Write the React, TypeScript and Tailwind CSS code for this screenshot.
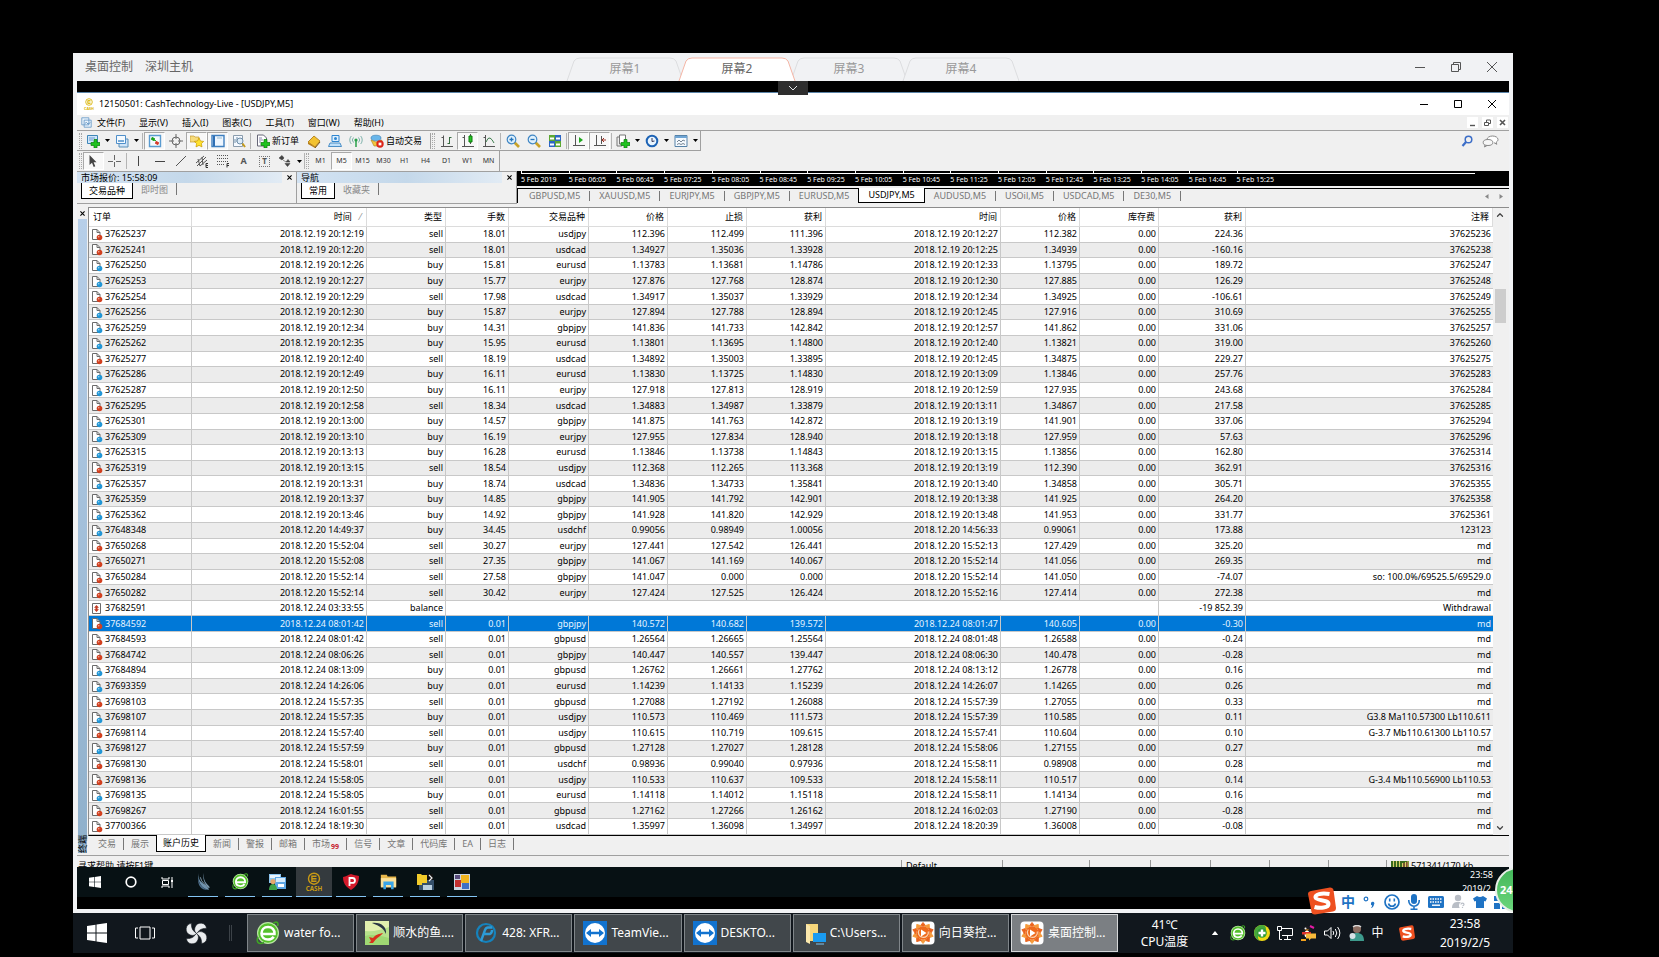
import type { ReactNode } from "react";
import { ChevronDown, ChevronUp } from "lucide-react";

type Order = {
  id: string;
  open: string;
  type: string;
  lots: string;
  symbol: string;
  price: string;
  sl: string;
  tp: string;
  close: string;
  closePrice: string;
  profit: string;
  comment: string;
};

const RAW = `37625237|2018.12.19 20:12:19|sell|18.01|usdjpy|112.396|112.499|111.396|2018.12.19 20:12:27|112.382|224.36|37625236
37625241|2018.12.19 20:12:20|sell|18.01|usdcad|1.34927|1.35036|1.33928|2018.12.19 20:12:25|1.34939|-160.16|37625238
37625250|2018.12.19 20:12:26|buy|15.81|eurusd|1.13783|1.13681|1.14786|2018.12.19 20:12:33|1.13795|189.72|37625247
37625253|2018.12.19 20:12:27|buy|15.77|eurjpy|127.876|127.768|128.874|2018.12.19 20:12:30|127.885|126.29|37625248
37625254|2018.12.19 20:12:29|sell|17.98|usdcad|1.34917|1.35037|1.33929|2018.12.19 20:12:34|1.34925|-106.61|37625249
37625256|2018.12.19 20:12:30|buy|15.87|eurjpy|127.894|127.788|128.894|2018.12.19 20:12:45|127.916|310.69|37625255
37625259|2018.12.19 20:12:34|buy|14.31|gbpjpy|141.836|141.733|142.842|2018.12.19 20:12:57|141.862|331.06|37625257
37625262|2018.12.19 20:12:35|buy|15.95|eurusd|1.13801|1.13695|1.14800|2018.12.19 20:12:40|1.13821|319.00|37625260
37625277|2018.12.19 20:12:40|sell|18.19|usdcad|1.34892|1.35003|1.33895|2018.12.19 20:12:45|1.34875|229.27|37625275
37625286|2018.12.19 20:12:49|buy|16.11|eurusd|1.13830|1.13725|1.14830|2018.12.19 20:13:09|1.13846|257.76|37625283
37625287|2018.12.19 20:12:50|buy|16.11|eurjpy|127.918|127.813|128.919|2018.12.19 20:12:59|127.935|243.68|37625284
37625295|2018.12.19 20:12:58|sell|18.34|usdcad|1.34883|1.34987|1.33879|2018.12.19 20:13:11|1.34867|217.58|37625285
37625301|2018.12.19 20:13:00|buy|14.57|gbpjpy|141.875|141.763|142.872|2018.12.19 20:13:19|141.901|337.06|37625294
37625309|2018.12.19 20:13:10|buy|16.19|eurjpy|127.955|127.834|128.940|2018.12.19 20:13:18|127.959|57.63|37625296
37625315|2018.12.19 20:13:13|buy|16.28|eurusd|1.13846|1.13738|1.14843|2018.12.19 20:13:15|1.13856|162.80|37625314
37625319|2018.12.19 20:13:15|sell|18.54|usdjpy|112.368|112.265|113.368|2018.12.19 20:13:19|112.390|362.91|37625316
37625357|2018.12.19 20:13:31|buy|18.74|usdcad|1.34836|1.34733|1.35841|2018.12.19 20:13:40|1.34858|305.71|37625355
37625359|2018.12.19 20:13:37|buy|14.85|gbpjpy|141.905|141.792|142.901|2018.12.19 20:13:38|141.925|264.20|37625358
37625362|2018.12.19 20:13:46|buy|14.92|gbpjpy|141.928|141.820|142.929|2018.12.19 20:13:48|141.953|331.77|37625361
37648348|2018.12.20 14:49:37|buy|34.45|usdchf|0.99056|0.98949|1.00056|2018.12.20 14:56:33|0.99061|173.88|123123
37650268|2018.12.20 15:52:04|sell|30.27|eurjpy|127.441|127.542|126.441|2018.12.20 15:52:13|127.429|325.20|md
37650271|2018.12.20 15:52:08|sell|27.35|gbpjpy|141.067|141.169|140.067|2018.12.20 15:52:14|141.056|269.35|md
37650284|2018.12.20 15:52:14|sell|27.58|gbpjpy|141.047|0.000|0.000|2018.12.20 15:52:14|141.050|-74.07|so: 100.0%/69525.5/69529.0
37650282|2018.12.20 15:52:14|sell|30.42|eurjpy|127.424|127.525|126.424|2018.12.20 15:52:16|127.414|272.38|md
37682591|2018.12.24 03:33:55|balance||||||||-19 852.39|Withdrawal
37684592|2018.12.24 08:01:42|sell|0.01|gbpjpy|140.572|140.682|139.572|2018.12.24 08:01:47|140.605|-0.30|md
37684593|2018.12.24 08:01:42|sell|0.01|gbpusd|1.26564|1.26665|1.25564|2018.12.24 08:01:48|1.26588|-0.24|md
37684742|2018.12.24 08:06:26|sell|0.01|gbpjpy|140.447|140.557|139.447|2018.12.24 08:06:30|140.478|-0.28|md
37684894|2018.12.24 08:13:09|buy|0.01|gbpusd|1.26762|1.26661|1.27762|2018.12.24 08:13:12|1.26778|0.16|md
37693359|2018.12.24 14:26:06|buy|0.01|eurusd|1.14239|1.14133|1.15239|2018.12.24 14:26:07|1.14265|0.26|md
37698103|2018.12.24 15:57:35|sell|0.01|gbpusd|1.27088|1.27192|1.26088|2018.12.24 15:57:39|1.27055|0.33|md
37698107|2018.12.24 15:57:35|buy|0.01|usdjpy|110.573|110.469|111.573|2018.12.24 15:57:39|110.585|0.11|G3.8 Ma110.57300 Lb110.611
37698114|2018.12.24 15:57:40|sell|0.01|usdjpy|110.615|110.719|109.615|2018.12.24 15:57:41|110.604|0.10|G-3.7 Mb110.61300 Lb110.57
37698127|2018.12.24 15:57:59|buy|0.01|gbpusd|1.27128|1.27027|1.28128|2018.12.24 15:58:06|1.27155|0.27|md
37698130|2018.12.24 15:58:01|sell|0.01|usdchf|0.98936|0.99040|0.97936|2018.12.24 15:58:11|0.98908|0.28|md
37698136|2018.12.24 15:58:05|sell|0.01|usdjpy|110.533|110.637|109.533|2018.12.24 15:58:11|110.517|0.14|G-3.4 Mb110.56900 Lb110.53
37698135|2018.12.24 15:58:05|buy|0.01|eurusd|1.14118|1.14012|1.15118|2018.12.24 15:58:11|1.14134|0.16|md
37698267|2018.12.24 16:01:55|sell|0.01|gbpusd|1.27162|1.27266|1.26162|2018.12.24 16:02:03|1.27190|-0.28|md
37700366|2018.12.24 18:19:30|sell|0.01|usdcad|1.35997|1.36098|1.34997|2018.12.24 18:20:39|1.36008|-0.08|md`;

const ORDERS: Order[] = RAW.split("\n").map((line) => {
  const c = line.split("|");
  return {
    id: c[0], open: c[1], type: c[2], lots: c[3], symbol: c[4], price: c[5], sl: c[6], tp: c[7],
    close: c[8], closePrice: c[9], profit: c[10], comment: c[11],
  };
});

const SELECTED = "37684592";

const CHART_TIMES = [
  "5 Feb 2019", "5 Feb 06:05", "5 Feb 06:45", "5 Feb 07:25", "5 Feb 08:05", "5 Feb 08:45", "5 Feb 09:25", "5 Feb 10:05",
  "5 Feb 10:45", "5 Feb 11:25", "5 Feb 12:05", "5 Feb 12:45", "5 Feb 13:25", "5 Feb 14:05", "5 Feb 14:45", "5 Feb 15:25",
];

const CHART_TABS = ["GBPUSD,M5", "XAUUSD,M5", "EURJPY,M5", "GBPJPY,M5", "EURUSD,M5", "USDJPY,M5", "AUDUSD,M5", "USOil,M5", "USDCAD,M5", "DE30,M5"];

const TERMINAL_TABS = ["交易", "展示", "账户历史", "新闻", "警报", "邮箱", "市场", "信号", "文章", "代码库", "EA", "日志"];

function Icon(props: { children: ReactNode; box?: string; className?: string }) {
  return (
    <svg viewBox={props.box ?? "0 0 14 14"} className={props.className ?? "size-[14px] shrink-0"} fill="none" aria-hidden="true">
      {props.children}
    </svg>
  );
}

/* ---------- outer remote-control window ---------- */

function ScreenTab(props: { label: string; active?: boolean }) {
  return (
    <button className={["relative w-[112px] h-6 text-xs", props.active ? "z-10 text-[#666]" : "text-[#999]"].join(" ")}>
      <svg viewBox="0 0 118 24" className="absolute -left-[3px] top-0 h-6 w-[118px]" fill={props.active ? "#fff" : "#f1f2f4"} aria-hidden="true">
        <path d="M1 24 L8 4 Q10 1 14 1 H104 Q108 1 110 4 L117 24" stroke={props.active ? "#f4b5a5" : "#dcdddf"} />
      </svg>
      <span className="relative">{props.label}</span>
    </button>
  );
}

function OuterTitle() {
  return (
    <header className="relative grid h-7 grid-cols-[1fr_auto_1fr] items-center bg-[#f1f2f4] text-xs text-[#666]">
      <div className="flex gap-3 pl-3">
        <span>桌面控制</span>
        <span>深圳主机</span>
      </div>
      <nav className="flex self-end">
        <ScreenTab label="屏幕1" />
        <ScreenTab label="屏幕2" active />
        <ScreenTab label="屏幕3" />
        <ScreenTab label="屏幕4" />
      </nav>
      <div className="flex justify-end gap-6 pr-[15px] text-[#555]">
        <button aria-label="最小化"><Icon box="0 0 12 12" className="size-3"><path d="M1 6.5h10" stroke="currentColor" /></Icon></button>
        <button aria-label="还原"><Icon box="0 0 12 12" className="size-3"><path d="M1.5 3.5h7v7h-7zM3.5 3.5v-2h7v7h-2" stroke="currentColor" /></Icon></button>
        <button aria-label="关闭"><Icon box="0 0 12 12" className="size-3"><path d="M1 1l10 10M11 1L1 11" stroke="currentColor" /></Icon></button>
      </div>
      <button aria-label="展开" className="absolute left-1/2 top-7 z-20 -ml-[15px] flex h-[14px] w-[30px] items-center justify-center bg-[#2e2e2e] text-gray-200">
        <Icon box="0 0 10 6" className="h-[6px] w-[10px]"><path d="M1 1l4 4 4-4" stroke="currentColor" /></Icon>
      </button>
    </header>
  );
}

/* ---------- terminal: title, menu, toolbars ---------- */

function CashLogo(props: { className: string; color: string }) {
  return (
    <svg viewBox="0 0 24 24" className={props.className} fill="none" stroke={props.color} aria-hidden="true">
      <circle cx="12" cy="8" r="6.6" strokeWidth="1.7" />
      <path d="M15 5H9.5v6H15M9.5 8H15" strokeWidth="1.7" />
      <text x="12" y="23" textAnchor="middle" fontSize="7.5" fontWeight="700" stroke="none" fill={props.color}>CASH</text>
    </svg>
  );
}

function TitleBar() {
  return (
    <div className="flex h-[22px] items-center bg-white pl-[6px] pr-3">
      <CashLogo className="size-[12px]" color="#d9b300" />
      <h1 className="ml-1 flex-1 text-[9px] text-black">12150501: CashTechnology-Live - [USDJPY,M5]</h1>
      <div className="flex items-center gap-6 text-black">
        <button aria-label="最小化"><Icon box="0 0 10 10" className="size-[10px]"><path d="M1 5.5h8" stroke="currentColor" /></Icon></button>
        <button aria-label="最大化"><Icon box="0 0 10 10" className="size-[10px]"><path d="M1.5 1.5h7v7h-7z" stroke="currentColor" /></Icon></button>
        <button aria-label="关闭"><Icon box="0 0 10 10" className="size-[10px]"><path d="M1 1l8 8M9 1L1 9" stroke="currentColor" /></Icon></button>
      </div>
    </div>
  );
}

const MENUS = ["文件(F)", "显示(V)", "插入(I)", "图表(C)", "工具(T)", "窗口(W)", "帮助(H)"];

function MenuBar() {
  return (
    <div className="flex h-4 items-center border-b border-[#a0a0a0] pl-1">
      <Icon className="size-[11px]">
        <path d="M1 1h9v9H1zM4 4h9v9H4z" fill="#e8f2fb" stroke="#5f94c4" />
        <path d="M5 8l2-1 2 2 3-2" stroke="#4d86ba" />
      </Icon>
      <div className="ml-[5px] flex gap-[14px]">
        {MENUS.map((m) => (
          <button key={m} className="text-[9px] text-black">{m}</button>
        ))}
      </div>
      <div className="ml-auto flex gap-1 pr-px text-[#555]">
        <button aria-label="最小化图表" className="bg-white"><Icon box="0 0 11 11" className="size-[11px]"><path d="M3 8.5h5" stroke="currentColor" strokeWidth="1.4" /></Icon></button>
        <button aria-label="还原图表" className="bg-white"><Icon box="0 0 11 11" className="size-[11px]"><path d="M2.5 5.5h4v3h-4zM4.5 5v-2h4v3.5h-2" stroke="currentColor" /></Icon></button>
        <button aria-label="关闭图表" className="bg-white"><Icon box="0 0 11 11" className="size-[11px]"><path d="M3 3l5 5M8 3L3 8" stroke="currentColor" strokeWidth="1.6" /></Icon></button>
      </div>
    </div>
  );
}

function Grip() {
  return <span className="mr-px h-4 w-[3px] shrink-0 border-x border-dotted border-[#a8a8a8]" />;
}

function Sep() {
  return <span className="mx-px h-4 w-px shrink-0 bg-[#b4b4b4]" />;
}

function Tool(props: { label: string; pressed?: boolean; drop?: boolean; text?: string; children?: ReactNode }) {
  return (
    <button
      aria-label={props.label}
      className={[
        "flex h-[18px] shrink-0 items-center justify-center text-[9px]",
        props.text ? "gap-[2px] px-1" : props.drop ? "w-[29px] gap-[5px]" : "w-[21px]",
        props.pressed ? "border border-[#a9a9a9] border-b-white border-r-white bg-[#f8f8f8]" : "",
      ].join(" ")}
    >
      {props.children}
      {props.text ? <span>{props.text}</span> : null}
      {props.drop ? <Icon box="0 0 5 3" className="h-[3px] w-[5px] shrink-0"><path d="M0 0h5L2.5 3z" fill="#000" /></Icon> : null}
    </button>
  );
}

const PLUS = "M8 5.500h3v3h3v3h-3v2.500H8v-2.500H5v-3h3z";

function Toolbar() {
  return (
    <div className="flex h-5 items-center pr-2">
      <div className="flex h-5 items-center border-b border-r border-[#a0a0a0] pl-[2px]">
        <Grip />
        <Tool label="新图表" drop>
          <Icon><path d="M1.5 1.5h10v8h-10z" fill="#cfe6fa" stroke="#3f86b8" /><path d="M3 4h6M3 6h4" stroke="#6a9bd0" /><path d={PLUS} fill="#1fc21f" stroke="#0a7d0a" strokeWidth=".7" /></Icon>
        </Tool>
        <Tool label="配置文件" drop>
          <Icon><path d="M4 5h9v8H4z" fill="#cfe4f7" stroke="#5a8fb8" /><path d="M1.5 1.5h9v8h-9z" fill="#f4faff" stroke="#4f8fca" /><path d="M3 7h6" stroke="#4f8fca" strokeWidth="1.5" /></Icon>
        </Tool>
        <Sep />
        <Tool label="市场报价" pressed>
          <Icon><path d="M1.500 1.500h11v11h-11z" fill="#f4faff" stroke="#5a9bd0" strokeWidth="1.400" /><path d="M4 3.500l2.500 1-.5 2-2.500-1zM6 6l2 .8" fill="#18a018" stroke="#18a018" /><path d="M8 7.500l2.500 1-.5 2-2.500-1z" fill="#d63b2a" stroke="#d63b2a" /></Icon>
        </Tool>
        <Tool label="数据窗口">
          <Icon><circle cx="7" cy="7" r="4" stroke="#666" /><path d="M7 0v5M7 9v5M0 7h5M9 7h5" stroke="#666" /></Icon>
        </Tool>
        <Tool label="导航" pressed>
          <Icon><path d="M0 2h4l1 1h4v5H0z" fill="#f7dc7c" stroke="#c39a33" strokeWidth=".7" /><path d="M9 4l1.5 3 3.2.4-2.3 2.2.6 3.3L9 11.4 6 12.9l.6-3.3L4.3 7.4 7.5 7z" fill="#ffe22e" stroke="#c79a00" strokeWidth=".7" /></Icon>
        </Tool>
        <Tool label="终端" pressed>
          <Icon><path d="M1 1.5h12v11H1z" fill="#eef6ff" stroke="#3f7fbf" strokeWidth="1.400" /><path d="M2 2h2v10H2z" fill="#2f6fb4" /><path d="M6 4h5" stroke="#9bc" /></Icon>
        </Tool>
        <Tool label="策略测试">
          <Icon><path d="M1.5 1.5h9v11h-9z" fill="#f5f9ff" stroke="#8a9cad" /><path d="M3 9V5M5 8V3" stroke="#6f8ea8" /><circle cx="8" cy="7" r="3" fill="#dcebf8" stroke="#6f8ea8" /><path d="M10.5 9.5L13 13" stroke="#c49a1c" strokeWidth="2" /></Icon>
        </Tool>
        <Sep />
        <Tool label="新订单" text="新订单">
          <Icon><path d="M1.5 1h6l3 3v8h-9z" fill="#fff" stroke="#667" /><path d="M3 4h3M3 6h4M3 8h2" stroke="#88a" /><path d={PLUS} fill="#1fc21f" stroke="#0a7d0a" strokeWidth=".7" /></Icon>
        </Tool>
        <Tool label="编辑器">
          <Icon><path d="M1 8l6-6 6 5-5 6z" fill="#f2c230" stroke="#a87410" strokeWidth=".8" /><path d="M1 8v2l7 4v-1z" fill="#b67d16" /><path d="M8 14l5-6" stroke="#7c5410" /></Icon>
        </Tool>
        <Tool label="社区">
          <Icon><path d="M4 1.5h7v6H4z" fill="#dff0ff" stroke="#2f86d0" /><circle cx="7.5" cy="4.5" r="1.5" fill="#2f86d0" /><path d="M2 9h10l1.5 3.5H.5z" fill="#bfe0fa" stroke="#4b8ec6" /></Icon>
        </Tool>
        <Tool label="信号">
          <Icon><circle cx="7" cy="6" r="1.6" fill="#2aa04a" /><path d="M7 7v6" stroke="#2aa04a" strokeWidth="1.5" /><path d="M4.5 3.5a3.5 3.5 0 000 5M9.5 3.5a3.5 3.5 0 010 5M2.3 2a6 6 0 000 8M11.7 2a6 6 0 010 8" stroke="#7fb2ab" /></Icon>
        </Tool>
        <Tool label="自动交易" text="自动交易">
          <Icon><ellipse cx="6" cy="4" rx="5" ry="2.8" fill="#69b6ea" stroke="#327bb0" strokeWidth=".6" /><path d="M1 6l5 2 6-2-2 6H4z" fill="#f3c63c" stroke="#a8801c" strokeWidth=".6" /><circle cx="10" cy="10" r="3.7" fill="#dc2418" /><path d="M8.6 8.6h2.8v2.8H8.6z" fill="#fff" /></Icon>
        </Tool>
        <span className="ml-1 mr-px h-4 w-px bg-[#a0a0a0]" />
        <Grip />
        <Tool label="柱状图">
          <Icon><path d="M3.5 1.500v11M1 12.500h12M1.500 3.500h2" stroke="#555" /><path d="M9.500 3v7M9.500 3.500h2M7.500 9.500h2" stroke="#356b3f" /></Icon>
        </Tool>
        <Tool label="蜡烛图" pressed>
          <Icon><path d="M3.500 1v11M1 12.500h12M9.500 0v10M1.500 3.500h2" stroke="#555" /><path d="M8 2h3v6H8z" fill="#28c428" stroke="#0a7d0a" /></Icon>
        </Tool>
        <Tool label="折线图">
          <Icon><path d="M3.500 1v11M1 12.500h12M1.500 3.500h2" stroke="#555" /><path d="M4 8q2-5 4-4t4 5" stroke="#3f7f4f" /></Icon>
        </Tool>
        <Sep />
        <Tool label="放大">
          <Icon><path d="M8.5 8.5L13 13" stroke="#c9a227" strokeWidth="2.6" /><circle cx="5.5" cy="5.5" r="4.3" fill="#dff0fc" stroke="#3f86c4" strokeWidth="1.2" /><path d="M3.5 5.5h4M5.5 3.5v4" stroke="#2474bb" strokeWidth="1.3" /></Icon>
        </Tool>
        <Tool label="缩小">
          <Icon><path d="M8.5 8.5L13 13" stroke="#c9a227" strokeWidth="2.6" /><circle cx="5.5" cy="5.5" r="4.3" fill="#dff0fc" stroke="#3f86c4" strokeWidth="1.2" /><path d="M3.5 5.5h4" stroke="#2474bb" strokeWidth="1.3" /></Icon>
        </Tool>
        <Tool label="平铺窗口">
          <Icon><path d="M1 1h6v6H1zM7 7h6v6H7z" fill="#5da832" /><path d="M7 1h6v6H7zM1 7h6v6H1z" fill="#2d66c4" /><path d="M2 3.5h4v2H2zM8 3.5h4v2H8zM2 9.5h4v2H2zM8 9.5h4v2H8z" fill="#fff" /></Icon>
        </Tool>
        <Sep />
        <Tool label="自动滚动" pressed>
          <Icon><path d="M3.500 1v11M1 11.500h12" stroke="#555" /><path d="M7 3l4 3-4 3z" fill="#1fa81f" /></Icon>
        </Tool>
        <Tool label="图表平移" pressed>
          <Icon><path d="M3.500 1v11M1 11.500h12M8.500 2v8" stroke="#555" /><path d="M13 6H9M11 4L9 6l2 2" stroke="#9c2f22" /></Icon>
        </Tool>
        <Sep />
        <Tool label="指标" drop>
          <Icon><path d="M1 3h5v9H1z" fill="#eee" stroke="#777" /><path d="M3.5 1h6v9h-6z" fill="#fff" stroke="#777" /><path d={PLUS} fill="#1fc21f" stroke="#0a7d0a" strokeWidth=".7" /></Icon>
        </Tool>
        <Tool label="时间周期" drop>
          <Icon><circle cx="7" cy="7" r="5.3" fill="#e9f5ff" stroke="#1d63b5" strokeWidth="2" /><path d="M7 4v3.5l2.5-.5" stroke="#335" /></Icon>
        </Tool>
        <Tool label="模板" drop>
          <Icon><path d="M1 1.5h12v11H1z" fill="#f5faff" stroke="#5682a8" /><path d="M1 3h12" stroke="#6fa5d4" strokeWidth="2" /><path d="M3 8l2-2 2 2 2-2 2 1M3 10.5l2-1 2 1 2-1 2 1" stroke="#567" strokeWidth=".8" /></Icon>
        </Tool>
      </div>
      <div className="ml-auto flex items-center gap-2 pr-[2px]">
        <button aria-label="搜索" className="pr-px">
          <Icon box="0 0 12 12" className="size-3"><circle cx="7.500" cy="4.500" r="3.300" stroke="#3c6ec8" strokeWidth="1.500" /><path d="M5 7L1.500 11" stroke="#3c6ec8" strokeWidth="2.200" /></Icon>
        </button>
        <button aria-label="聊天">
          <Icon box="0 0 17 13" className="h-[13px] w-[17px]">
            <path d="M5 4.500C5 2.500 7.500 1 10.500 1S16 2.500 16 4.500c0 1.300-.8 2-1.800 2.600l.6 2.200L12 7.700" fill="#fff" stroke="#888" />
            <ellipse cx="6" cy="7.500" rx="4.800" ry="3" fill="#f6f6f6" stroke="#888" />
            <path d="M3 10l-.5 2L5 10.500" stroke="#888" />
          </Icon>
        </button>
      </div>
    </div>
  );
}

const PERIODS = ["M1", "M5", "M15", "M30", "H1", "H4", "D1", "W1", "MN"];

function DrawingBar() {
  return (
    <div className="flex h-5 items-center">
      <div className="flex h-5 items-center border-r border-[#a0a0a0] pl-[2px]">
        <Grip />
        <Tool label="光标" pressed><Icon><path d="M2.500 1v10L5 8.800 6.700 13l1.600-.7-1.700-4h2.900z" fill="#444" /></Icon></Tool>
        <Tool label="十字线"><Icon><path d="M6.500 1v5M6.500 8v5M0 7.500h5M8 7.500h5" stroke="#666" /></Icon></Tool>
        <Sep />
        <Tool label="垂直线"><Icon><path d="M6.5 2v10" stroke="#444" /></Icon></Tool>
        <Tool label="水平线"><Icon><path d="M2 7.5h10" stroke="#444" /></Icon></Tool>
        <Tool label="趋势线"><Icon><path d="M2 12L12 2" stroke="#555" /></Icon></Tool>
        <Tool label="通道"><Icon><path d="M1 9l8-7M2 12l9-9M5 12l7-6M3 5l2 7M7 3l1 8" stroke="#555" /><path d="M13 9.5h-2v4h2M11 11.5h2" stroke="#333" /></Icon></Tool>
        <Tool label="斐波纳契"><Icon><path d="M1 1.500h12M1 4.500h12M1 7.500h12M1 10.500h8" stroke="#555" strokeDasharray="1 1" /><path d="M13 9.500h-2v4M11 11.500h2" stroke="#333" /></Icon></Tool>
        <Tool label="文字"><span className="font-bold text-[#555]">A</span></Tool>
        <Tool label="文字标签">
          <span className="flex size-[11px] items-center justify-center border border-dotted border-[#777] text-[8px] font-bold leading-none text-[#555]">T</span>
        </Tool>
        <Tool label="箭头" drop><Icon><path d="M1 4l3-2.500L6 4 4 6zM5 6l3 2M8 8h4l-2-2.500zM7 9.500l2.500 3L12 9.500z" fill="#444" stroke="#444" strokeWidth=".6" /></Icon></Tool>
        <span className="mr-px h-4 w-px bg-[#b4b4b4]" />
        <Grip />
        {PERIODS.map((p) => (
          <button
            key={p}
            className={["h-[18px] w-[21px] text-[7px] text-[#333]", p === "M5" ? "border border-[#a9a9a9] border-b-white border-r-white bg-[#f8f8f8]" : ""].join(" ")}
          >
            {p}
          </button>
        ))}
      </div>
    </div>
  );
}

/* ---------- docked panels and chart strip ---------- */

function DockPanel(props: { title: string; tabs: [string, string] }) {
  return (
    <section className="flex w-[220px] shrink-0 flex-col border-b border-r border-t border-[#a0a0a0]">
      <div className="flex h-[11px] items-center justify-between bg-linear-to-r from-[#d3e3f3] via-[#c4d8ea] to-[#e6eef6] pl-1">
        <h2 className="text-[9px] leading-[11px] text-black">{props.title}</h2>
        <button aria-label="关闭" className="flex h-[11px] w-[14px] items-center justify-center bg-[#f0f0f0]">
          <Icon box="0 0 6 6" className="size-[5px]"><path d="M.5.5l5 5M5.5.5l-5 5" stroke="#000" strokeWidth="1.3" /></Icon>
        </button>
      </div>
      <div className="flex h-5 items-start pl-1 text-[9px]">
        <button className="h-4 border border-t-0 border-black bg-white px-[7px] text-black">{props.tabs[0]}</button>
        <button className="h-3 border-r border-[#777] px-2 leading-[14px] text-[#888]">{props.tabs[1]}</button>
      </div>
    </section>
  );
}

function ChartStrip() {
  return (
    <section className="flex min-w-0 flex-1 flex-col">
      <div className="h-[17px] overflow-hidden border-b-2 border-[#f0f0f0] bg-black pl-1 pr-[34px]">
        <div className="flex w-[80%]">
          {CHART_TIMES.map((t) => (
            <span key={t} className="h-[2px] flex-1 border-l border-white" />
          ))}
        </div>
        <div className="border-t border-white">
          <div className="flex w-[80%] text-[7px] leading-[12px] text-white">
            {CHART_TIMES.map((t) => (
              <span key={t} className="min-w-0 flex-1 whitespace-nowrap">{t}</span>
            ))}
          </div>
        </div>
      </div>
      <div className="flex h-[15px] items-start border-l border-t border-black pl-[2px] text-[9px]">
        {CHART_TABS.map((t) =>
          t === "USDJPY,M5" ? (
            <button key={t} className="-mt-px h-[15px] border border-t-0 border-black bg-white px-[9px] leading-[14px] text-black">{t}</button>
          ) : (
            <button key={t} className="flex h-[14px] items-center text-[#777]">
              <span className="px-[9px]">{t}</span>
              {t === "EURUSD,M5" ? null : <span className="h-[10px] w-px bg-[#777]" />}
            </button>
          ),
        )}
        <div className="ml-auto flex gap-[10px] self-center pr-[6px]">
          <Icon box="0 0 4 5" className="h-[5px] w-1"><path d="M3.5 0v5L0 2.5z" fill="#888" /></Icon>
          <Icon box="0 0 4 5" className="h-[5px] w-1"><path d="M.5 0v5L4 2.5z" fill="#888" /></Icon>
        </div>
      </div>
    </section>
  );
}

/* ---------- account history ---------- */

function OrderIcon(props: { type: string }) {
  if (props.type === "balance") {
    return (
      <Icon box="0 0 12 13" className="h-[13px] w-3 shrink-0">
        <path d="M1.5 1.5h8v10h-8z" fill="#fff" stroke="#6b6b6b" />
        <path d="M5.5 3L8 5.700H6.500v1.600H8L5.500 10 3 7.300h1.500V5.700H3z" fill="#c23a22" />
      </Icon>
    );
  }
  const ball = props.type === "sell" ? "#d2401f" : "#2196d6";
  return (
    <Icon box="0 0 12 13" className="h-[13px] w-3 shrink-0">
      <path d="M1.5 1.5H6l3 3v7H1.5z" fill="#fff" stroke="#6b6b6b" />
      <path d="M6 1.5v3h3" stroke="#6b6b6b" />
      <circle cx="8.5" cy="9.5" r="2.8" fill={ball} />
      <circle cx="7.7" cy="8.7" r=".8" fill="#fff" fillOpacity=".6" />
    </Icon>
  );
}

const HEADERS = ["订单", "时间", "类型", "手数", "交易品种", "价格", "止损", "获利", "时间", "价格", "库存费", "获利", "注释"];

function Cell(props: { children?: ReactNode; span?: number; last?: boolean }) {
  return (
    <td colSpan={props.span} className={["border-b border-[#c8c8c8] p-0 pr-[2px]", props.last ? "" : "border-r"].join(" ")}>
      {props.children}
    </td>
  );
}

function OrderRow(props: { order: Order; index: number }) {
  const o = props.order;
  const tone = o.id === SELECTED ? "bg-[#0078d7] text-[#e6f4ff]" : props.index % 2 ? "bg-[#ececec]" : "bg-white";
  return (
    <tr className={tone}>
      <td className="border-b border-r border-[#c8c8c8] p-0 pl-[2px] text-left">
        <div className="flex h-[14px] items-center gap-[2px]">
          <OrderIcon type={o.type} />
          {o.id}
        </div>
      </td>
      <Cell>{o.open}</Cell>
      <Cell>{o.type}</Cell>
      {o.type === "balance" ? (
        <Cell span={8} />
      ) : (
        <>
          <Cell>{o.lots}</Cell>
          <Cell>{o.symbol}</Cell>
          <Cell>{o.price}</Cell>
          <Cell>{o.sl}</Cell>
          <Cell>{o.tp}</Cell>
          <Cell>{o.close}</Cell>
          <Cell>{o.closePrice}</Cell>
          <Cell>0.00</Cell>
        </>
      )}
      <Cell>{o.profit}</Cell>
      <Cell last>{o.comment}</Cell>
    </tr>
  );
}

function HistoryTable() {
  return (
    <table className="h-full w-full table-fixed border-separate border-spacing-0 text-right text-[9px] leading-[14px] text-black">
      <colgroup>
        <col className="w-[103px]" />
        <col className="w-[175px]" />
        <col className="w-[79px]" />
        <col className="w-[63px]" />
        <col className="w-[80px]" />
        <col className="w-[79px]" />
        <col className="w-[79px]" />
        <col className="w-[79px]" />
        <col className="w-[175px]" />
        <col className="w-[79px]" />
        <col className="w-[79px]" />
        <col className="w-[87px]" />
        <col />
      </colgroup>
      <thead>
        <tr className="h-[19px] bg-white">
          {HEADERS.map((h, i) => (
            <th key={i} className={["h-[19px] border-b border-r border-[#dcdcdc] p-0 pb-px font-normal", i === 0 ? "pl-1 text-left" : "pr-[3px]"].join(" ")}>
              {h}
              {i === 1 ? <span className="ml-2 mr-[2px] text-[#888]">⁄</span> : null}
            </th>
          ))}
        </tr>
      </thead>
      <tbody>
        {ORDERS.map((o, i) => (
          <OrderRow key={o.id} order={o} index={i} />
        ))}
      </tbody>
    </table>
  );
}

function Terminal() {
  return (
    <section className="flex min-h-0 flex-1 pt-[3px]">
      <div className="flex w-[11px] shrink-0 flex-col items-center">
        <button aria-label="关闭终端" className="flex h-3 items-center">
          <Icon box="0 0 6 6" className="size-[5px]"><path d="M.5.5l5 5M5.5.5l-5 5" stroke="#000" strokeWidth="1.3" /></Icon>
        </button>
        <div className="mb-[2px] flex w-[9px] flex-1 items-end justify-center bg-linear-to-b from-[#b7cfe9] to-[#8fb0cb]">
          <span className="rotate-180 text-[9px] leading-[9px] text-black [text-orientation:sideways] [writing-mode:vertical-rl]">终端</span>
        </div>
      </div>
      <div className="flex min-w-0 flex-1 flex-col">
        <div className="flex min-h-0 flex-1 border-l border-t border-[#8c8c8c] border-b border-b-black bg-white">
          <div className="min-w-0 flex-1 overflow-hidden">
            <HistoryTable />
          </div>
          <div className="flex w-[14px] shrink-0 flex-col items-center bg-[#f0f0f0]">
            <ChevronUp className="h-[14px] w-[10px] text-[#444]" strokeWidth={3} />
            <div className="grow-[67]" />
            <div className="h-[34px] w-[11px] bg-[#cdcdcd]" />
            <div className="grow-[496]" />
            <ChevronDown className="h-[14px] w-[10px] text-[#444]" strokeWidth={3} />
          </div>
          <div className="w-[2px] bg-[#f0f0f0]" />
        </div>
        <nav className="flex h-[19px] items-start text-[9px] text-[#777]">
          {TERMINAL_TABS.map((t, i) =>
            t === "账户历史" ? (
              <button key={t} className="-mt-px h-[17px] border border-t-0 border-black bg-white px-[6px] text-black">{t}</button>
            ) : (
              <button key={t} className="flex h-4 items-center">
                <span className={i === 0 ? "pl-[10px] pr-[7px]" : "px-[7px]"}>
                  {t}
                  {t === "市场" ? <sub className="ml-px text-[7px] font-bold leading-none text-[#c4162a]">99</sub> : null}
                </span>
                {t === "展示" ? null : <span className="h-3 w-px bg-[#777]" />}
              </button>
            ),
          )}
        </nav>
      </div>
    </section>
  );
}

function StatusBar() {
  return (
    <div className="flex h-3 overflow-hidden border-t border-[#a0a0a0] pt-1 text-[9px] leading-[11px] text-black">
      <span className="flex-1 pl-px">寻求帮助,请按F1键</span>
      <span className="w-[101px] border-l border-[#999] pl-1">Default</span>
      <span className="w-[87px] border-l border-[#999]" />
      <span className="w-[61px] border-l border-[#999]" />
      <span className="w-[60px] border-l border-[#999]" />
      <span className="w-[59px] border-l border-[#999]" />
      <span className="w-[59px] border-l border-[#999]" />
      <span className="w-[58px] border-l border-[#999]" />
      <span className="flex w-[123px] gap-[2px] border-l border-[#999] pl-1">
        <Icon box="0 0 18 8" className="mt-px h-2 w-[18px]">
          <path d="M0 0h18v8H0z" fill="#3b6b1e" />
          <path d="M2.5 0v8M5.5 0v8M8.5 0v8M11.5 2v6M14.5 1v7M17 0v8" stroke="#d9cf6a" />
          <path d="M13 2v6M16 1v7" stroke="#b44" />
        </Icon>
        571341/170 kb
      </span>
    </div>
  );
}

/* ---------- remote desktop task bar ---------- */

function WindowsLogo(props: { className: string }) {
  return (
    <svg viewBox="0 0 20 20" className={props.className} fill="#fff" aria-hidden="true">
      <path d="M0 3l8.5-1.3v7.8H0zM9.5 1.5L20 0v9.5H9.5zM0 10.5h8.5v7.8L0 17zM9.5 10.5H20V20L9.5 18.5z" />
    </svg>
  );
}

function BrowserLogo(props: { className: string }) {
  return (
    <svg viewBox="0 0 24 24" className={props.className} fill="none" aria-hidden="true">
      <circle cx="12" cy="12" r="11" fill="#b9e8a3" />
      <circle cx="12" cy="12" r="9.800" fill="#55c02c" />
      <path d="M5.500 13h13c.3-4.300-2.500-7-6.500-7S5.500 9 5.500 12.500s2.600 6 6.500 6c2.600 0 4.500-1 5.700-2.800" stroke="#fff" strokeWidth="2.600" />
      <path d="M2 16C0 21 2.500 24 8 21.500M17 2.500c3-2.500 6-1.500 4.500 2.500" stroke="#3ea523" strokeWidth="1.600" />
    </svg>
  );
}

function FolderLogo(props: { className: string }) {
  return (
    <svg viewBox="0 0 20 20" className={props.className} fill="none" aria-hidden="true">
      <path d="M1 2h7l1 2h10v12H1z" fill="#e8b74b" />
      <path d="M1 6h18v11H1z" fill="#fbe09a" />
      <path d="M4 10h12v9h-3v-5H7v5H4z" fill="#3aa5e8" />
    </svg>
  );
}

function RemoteApp(props: { label: string; active?: boolean; children: ReactNode }) {
  return (
    <button aria-label={props.label} className={["flex h-full w-9 flex-col items-center", props.active ? "bg-[#343a3e]" : ""].join(" ")}>
      <span className="flex flex-1 items-center">{props.children}</span>
      <span className={["h-px bg-[#84c5f4]", props.active ? "w-9" : "w-[30px]"].join(" ")} />
    </button>
  );
}

function RemoteTaskbar() {
  return (
    <div className="flex h-[30px] items-center bg-[#071114]">
      <button aria-label="开始" className="flex w-9 justify-center"><WindowsLogo className="size-3" /></button>
      <button aria-label="Cortana" className="flex w-9 justify-center">
        <Icon box="0 0 12 12" className="size-3"><circle cx="6" cy="6" r="4.8" stroke="#fff" strokeWidth="1.7" /></Icon>
      </button>
      <button aria-label="任务视图" className="flex w-9 justify-center">
        <Icon box="0 0 13 12" className="h-3 w-[13px]"><path d="M1 1v2h7V1M1.5 4.5h6v4h-6zM1 12v-2h7v2M11 1v11" stroke="#fff" /><path d="M10 4h2v2h-2z" fill="#fff" /></Icon>
      </button>
      <div className="flex h-full gap-px">
        <RemoteApp label="翼">
          <Icon box="0 0 16 16" className="size-[17px]"><path d="M3 0c0 6 2 8 5 10s5 4 5 6C7 15 2 9 3 0z" fill="#6f92ad" /><path d="M3 4c0 6 4 10 9 12C6 16 2 12 3 4z" fill="#4a6c8a" /><path d="M8 0c0 5 1 8 3 10s3 3 3 4C10 12 7 7 8 0z" fill="#7d9db6" /><path d="M5 4c1 5 5 7 8 10" stroke="#a5c0d3" strokeWidth=".7" /></Icon>
        </RemoteApp>
        <RemoteApp label="浏览器"><BrowserLogo className="size-[17px]" /></RemoteApp>
        <RemoteApp label="用户">
          <Icon box="0 0 18 16" className="h-4 w-[18px]"><path d="M1 0h12v9H1z" fill="#8cc4ee" /><path d="M2 1h10v3H2z" fill="#e9f3fb" /><path d="M7 3h11v12H7z" fill="#5da6e4" /><path d="M8 4h9v4H8z" fill="#d6ebfa" /><path d="M10 10h6v3h-6z" fill="#fff" /><circle cx="5" cy="7.500" r="2.600" fill="#e6a86c" /><path d="M1 16c0-4 2-6 4-6s4 2 4 6z" fill="#3fa447" /></Icon>
        </RemoteApp>
        <RemoteApp label="CASH" active><CashLogo className="size-5" color="#c99a14" /></RemoteApp>
        <RemoteApp label="PokerStars">
          <Icon box="0 0 16 16" className="size-4"><path d="M8 0c3 1 5 1.5 8 2 0 7-3 11-8 14C3 13 0 9 0 3c3-.5 5-2 8-3z" fill="#d31a2b" /><path d="M6.5 12V4h3a2.4 2.4 0 010 4.9h-3" stroke="#fff" strokeWidth="1.8" /></Icon>
        </RemoteApp>
        <RemoteApp label="文件资源管理器"><FolderLogo className="size-[17px]" /></RemoteApp>
        <RemoteApp label="备份">
          <Icon box="0 0 17 17" className="size-[17px]"><path d="M2 7h15v10H2z" fill="#35506b" /><path d="M6 12h9v5H6z" fill="#b9cfe0" /><path d="M9 1h7v6H9z" fill="#111" /><path d="M0 1h4l1 1h5v8H5v2H0z" fill="#f2cb2a" /><path d="M12 2l3 3-3 3" stroke="#eee" strokeWidth="1.2" /></Icon>
        </RemoteApp>
        <RemoteApp label="工具">
          <Icon box="0 0 16 16" className="size-4"><path d="M0 0h16v16H0z" fill="#cbd6e2" /><path d="M7 1h8v8H7z" fill="#f0b41e" /><path d="M1 6h6v7H1z" fill="#c23030" /><path d="M8 9h7v6H8z" fill="#3d6fc4" /><path d="M1 1h5v4H1z" fill="#5a4d7d" /></Icon>
        </RemoteApp>
      </div>
      <div className="ml-auto h-[30px] overflow-hidden pr-4 pt-px text-right text-[9px] leading-[14px] text-white">
        <div>23:58</div>
        <div className="pr-[2px]">2019/2</div>
      </div>
    </div>
  );
}

/* ---------- floating input-method bar ---------- */

function SogouLogo(props: { className: string }) {
  return (
    <svg viewBox="0 0 28 28" className={props.className} fill="none" aria-hidden="true">
      <path d="M3 4L22 .5q3 0 3.500 2.500L28 21q0 3-3 3.500L7 27.500q-3 0-3.500-2.500L0 7q0-2.500 3-3z" fill="#ee5020" />
      <path d="M21.500 7C13 5.500 7 7.500 7.500 10.500c.6 3.500 13 2 13 6.500 0 4-8.500 4.500-14 3" stroke="#fff" strokeWidth="4" />
    </svg>
  );
}

function ImeBar() {
  return (
    <div className="absolute bottom-0 right-0 flex h-[22px] w-[191px] items-center bg-white pl-[15px] text-[#1f73c4]">
      <SogouLogo className="absolute -left-[14px] -top-1 size-7" />
      <button className="flex h-[22px] w-[22px] items-center justify-center text-sm font-bold" aria-label="中文">中</button>
      <button aria-label="标点" className="flex w-[22px] justify-center">
        <Icon><circle cx="3" cy="4" r="1.8" stroke="currentColor" strokeWidth="1.2" /><path d="M8 8.5a1.7 1.7 0 113 1c-.3 2-1.3 3-2.5 3.5l-.4-.6c.8-.6 1-1.2 1-1.9A1.5 1.5 0 018 8.5z" fill="currentColor" /></Icon>
      </button>
      <button aria-label="表情" className="flex w-[22px] justify-center">
        <Icon box="0 0 16 16" className="size-4"><circle cx="8" cy="8" r="7" stroke="currentColor" strokeWidth="1.7" /><path d="M5.7 4.5v3M10.3 4.5v3M4.5 9.5a3.6 3.6 0 007 0" stroke="currentColor" strokeWidth="1.6" /></Icon>
      </button>
      <button aria-label="语音" className="flex w-[22px] justify-center">
        <Icon box="0 0 14 16" className="h-4 w-[14px]"><rect x="4" y="0" width="6" height="10" rx="3" fill="currentColor" /><path d="M1.800 6v1a5.200 5.200 0 0010.400 0V6M7 12v3M3.500 15.200h7" stroke="currentColor" strokeWidth="1.600" /></Icon>
      </button>
      <button aria-label="键盘" className="flex w-[22px] justify-center">
        <Icon box="0 0 16 12" className="h-3 w-4"><rect width="16" height="12" rx="1.5" fill="currentColor" /><path d="M2 3h12M2 6h12" stroke="#fff" strokeWidth="1.5" strokeDasharray="1.5 1" /><path d="M4 9.2h8" stroke="#fff" strokeWidth="1.4" /></Icon>
      </button>
      <button aria-label="帐户" className="flex w-[22px] justify-center text-[#b9bec6]">
        <Icon box="0 0 15 16" className="h-4 w-[15px]"><circle cx="7" cy="4" r="3.2" fill="currentColor" /><path d="M1 14c0-5 2.5-6 6-6s6 1 6 6z" fill="currentColor" /><circle cx="11.5" cy="11.5" r="3.5" fill="#fff" /><path d="M10 10.5q0-1.3 1.5-1.3t1.5 1.2q0 .8-1.5 1.6M11.5 13v1" stroke="currentColor" strokeWidth="1.2" /></Icon>
      </button>
      <button aria-label="皮肤" className="flex w-[22px] justify-center">
        <Icon><path d="M4 1q3 2 6 0l4 2.500-1.500 3L11 6v7H3V6l-1.500.5L0 3.500z" fill="currentColor" /></Icon>
      </button>
      <button aria-label="工具箱" className="ml-[3px]">
        <Icon><path d="M0 1h6v5H0zM8 1h6v5H8zM0 8h6v6H0zM8 8h6v6H8z" fill="currentColor" /></Icon>
      </button>
      <div className="absolute -right-[28px] -top-6 size-[46px] rounded-full border-2 border-[#e8efe8] bg-linear-to-b from-[#43b75a] to-[#6bd67c] pl-[3px] text-[11px] font-bold leading-[42px] text-white">
        24
      </div>
    </div>
  );
}

/* ---------- host task bar ---------- */

function TeamViewerLogo() {
  return (
    <Icon box="0 0 24 24" className="size-6 shrink-0">
      <path d="M0 0h24v24H0z" fill="#1273cf" />
      <circle cx="12" cy="12" r="10" fill="#fff" />
      <path d="M3 12l5-4v2.700h8V8l5 4-5 4v-2.700H8V16z" fill="#1273cf" />
    </Icon>
  );
}

const PETALS = [0, 36, 72, 108, 144, 180, 216, 252, 288, 324];

function SunflowerLogo() {
  return (
    <Icon box="0 0 24 24" className="size-6 shrink-0">
      <rect x=".5" y=".5" width="23" height="23" rx="4" fill="#fff" />
      {PETALS.map((a) => (
        <path key={a} d="M12 1.500l2.800 3.500h-5.600z" fill={a % 72 ? "#f59a3c" : "#ea6420"} stroke={a % 72 ? "#f59a3c" : "#ea6420"} strokeLinejoin="round" transform={`rotate(${a} 12 12)`} />
      ))}
      <circle cx="12" cy="12" r="6.800" fill="#ee6a1c" />
      <path d="M8.300 8.500a5 5 0 109 2" stroke="#fbd2b0" strokeWidth="1.200" />
      <path d="M10 8.500l5.500 3.500-5.500 3.500z" fill="#fff" />
    </Icon>
  );
}

const HOST_APPS: Array<{ label: string; icon: ReactNode; active?: boolean }> = [
  { label: "water fo...", icon: <BrowserLogo className="size-6 shrink-0" /> },
  {
    label: "顺水的鱼....",
    icon: (
      <Icon box="0 0 24 24" className="size-6 shrink-0">
        <path d="M0 0h24v24H0z" fill="#b7e08b" />
        <path d="M0 0h24v6q-12 5-24 4z" fill="#e2efae" />
        <path d="M0 15q8-3 24 2v7H0z" fill="#9fd873" />
        <path d="M7 2c9-1 15 4 14 11-2-5-6-8-14-11z" fill="#2b3544" />
        <path d="M18 12c-2 3-6 4-10 10l-4 0 2-2-2-4 4 1c3-4 6-4 10-5z" fill="#d8321c" />
      </Icon>
    ),
  },
  {
    label: "428: XFR...",
    icon: (
      <Icon box="0 0 24 24" className="size-6 shrink-0">
        <circle cx="12" cy="12" r="9" stroke="#1583bd" strokeWidth="2.200" />
        <path d="M7 20l4-11q1-2.500 3-2.500h4M9.500 13H16q2-1 2-4" stroke="#2c9bd6" strokeWidth="2.400" />
      </Icon>
    ),
  },
  { label: "TeamVie...", icon: <TeamViewerLogo /> },
  { label: "DESKTO...", icon: <TeamViewerLogo /> },
  {
    label: "C:\\Users...",
    icon: (
      <Icon box="0 0 24 24" className="size-6 shrink-0">
        <path d="M4 3h12v17H4z" fill="#f6d67a" />
        <path d="M4 3l4 2v18l-4-2z" fill="#fbe8ac" />
        <path d="M11 12h13v9H11z" fill="#1a9bf0" />
        <path d="M14 23h8" stroke="#7cc7f5" />
      </Icon>
    ),
  },
  { label: "向日葵控...", icon: <SunflowerLogo /> },
  { label: "桌面控制...", icon: <SunflowerLogo />, active: true },
];

function HostTaskbar() {
  return (
    <footer className="flex h-10 items-center bg-[#11171d] text-xs text-white">
      <button aria-label="开始" className="flex w-12 justify-center"><WindowsLogo className="size-5" /></button>
      <button aria-label="任务视图" className="flex w-12 justify-center">
        <Icon box="0 0 20 16" className="h-4 w-5"><path d="M5 2h10v12H5zM3 3H.5v10H3M17 3h2.5v10H17" stroke="#fff" /></Icon>
      </button>
      <button aria-label="风扇" className="flex w-[54px] justify-center">
        <Icon box="0 0 24 24" className="size-[23px]">
          {[0, 90, 180, 270].map((a) => (
            <path
              key={a}
              d="M12 12C10 10.500 9.500 8 10.500 5.500 11.500 2.500 14 1 17 1.200c3.500.3 5.500 3 5.300 5.600C20 6.500 17 7 15 8.800c-1.200 1-2 2-3 3.200z"
              fill="#e9ecee"
              stroke="#11171d"
              strokeWidth=".6"
              transform={`rotate(${a} 12 12)`}
            />
          ))}
        </Icon>
      </button>
      <span className="ml-[6px] mr-[15px] h-4 w-[3px] border-x border-[#3c4248]" />
      <div className="flex min-w-0 flex-1 gap-[2px]">
        {HOST_APPS.map((a) => (
          <button
            key={a.label}
            className={[
              "flex h-[38px] min-w-0 flex-1 items-center gap-1 border pl-2",
              a.active ? "border-[#d5d7d9] bg-[#7b7f83]" : "border-[#80868a] bg-[#41474b]",
            ].join(" ")}
          >
            {a.icon}
            <span className="truncate">{a.label}</span>
          </button>
        ))}
      </div>
      <div className="w-[93px] text-center leading-[17px]">
        <div>41℃</div>
        <div>CPU温度</div>
      </div>
      <div className="flex w-[206px] items-center justify-between pr-[2px]">
        <Icon box="0 0 8 5" className="h-1 w-2"><path d="M0 5l4-5 4 5z" fill="#fff" /></Icon>
        <BrowserLogo className="ml-1 size-4" />
        <Icon box="0 0 16 16" className="size-4"><circle cx="8" cy="8" r="8" fill="#f0d916" /><path d="M0 8a8 8 0 018-8 4 4 0 010 8 4 4 0 000 8 8 8 0 01-8-8z" fill="#46a83a" /><circle cx="8" cy="8" r="4.800" fill="#2f9a36" /><path d="M8 4.5v7M4.5 8h7" stroke="#fff" strokeWidth="2.4" /></Icon>
        <Icon box="0 0 16 14" className="h-[14px] w-4"><path d="M5 2.5h10.5v7H5M10.500 10v3M7 13.5h7M.5.5h4v4h-4zM2.5 5v8.5H5" stroke="#fff" /></Icon>
        <Icon box="0 0 16 16" className="size-4"><ellipse cx="7" cy="7" rx="4" ry="6" fill="#1c1c22" /><ellipse cx="7" cy="9" rx="2.5" ry="3.5" fill="#fff" /><circle cx="5.500" cy="3.500" r="1" fill="#fff" /><path d="M2 7h9v2.5H2z" fill="#e0312b" /><path d="M5 4.500h4L7 6z" fill="#f5a21c" /><path d="M6 8.500h10v5h-5l-2 2v-2H6z" fill="#f7ba3a" /><path d="M10 1l4 2" stroke="#e31ba5" strokeWidth="2" /><path d="M1 15h5" stroke="#f5a21c" strokeWidth="2" /></Icon>
        <Icon box="0 0 17 14" className="h-[14px] w-[17px]"><path d="M.5 5h3L7 1.5v11L3.5 9h-3zM9 5q1.5 2 0 4M11.3 3q3 4 0 8M13.6 1q4.500 6 0 12" stroke="#fff" /></Icon>
        <Icon box="0 0 16 16" className="size-4"><circle cx="9" cy="4" r="4" fill="#8c6e62" /><path d="M5 2q4-3 8 0" stroke="#d8d8d8" strokeWidth="1.5" /><path d="M2 16c0-6 3-8 7-8s7 2 7 8z" fill="#3d9a8c" /><circle cx="4.5" cy="11" r="3" fill="#d7e2e6" /></Icon>
        <span>中</span>
        <SogouLogo className="ml-2 size-4" />
      </div>
      <div className="w-[96px] text-center leading-[19px]">
        <div>23:58</div>
        <div>2019/2/5</div>
      </div>
    </footer>
  );
}

export default function App() {
  return (
    <div className="h-screen min-w-[1400px] overflow-hidden bg-black pb-1 pl-[73px] pr-[146px] pt-[53px] font-['Noto_Sans','Noto_Sans_CJK_SC',sans-serif]">
      <div className="flex h-full flex-col overflow-hidden">
        <OuterTitle />
        <main className="relative flex min-h-0 flex-1 flex-col overflow-hidden border-x-4 border-b-4 border-[#f1f2f4] bg-black">
          <div className="mt-[11px] flex min-h-0 flex-1 flex-col border-t border-[#5b84a8] bg-[#f0f0f0]">
            <TitleBar />
            <MenuBar />
            <Toolbar />
            <DrawingBar />
            <div className="flex">
              <DockPanel title="市场报价: 15:58:09" tabs={["交易品种", "即时图"]} />
              <DockPanel title="导航" tabs={["常用", "收藏夹"]} />
              <ChartStrip />
            </div>
            <Terminal />
            <StatusBar />
            <RemoteTaskbar />
          </div>
          <div className="h-3" />
        </main>
        <div className="relative">
          <ImeBar />
        </div>
        <HostTaskbar />
      </div>
    </div>
  );
}
